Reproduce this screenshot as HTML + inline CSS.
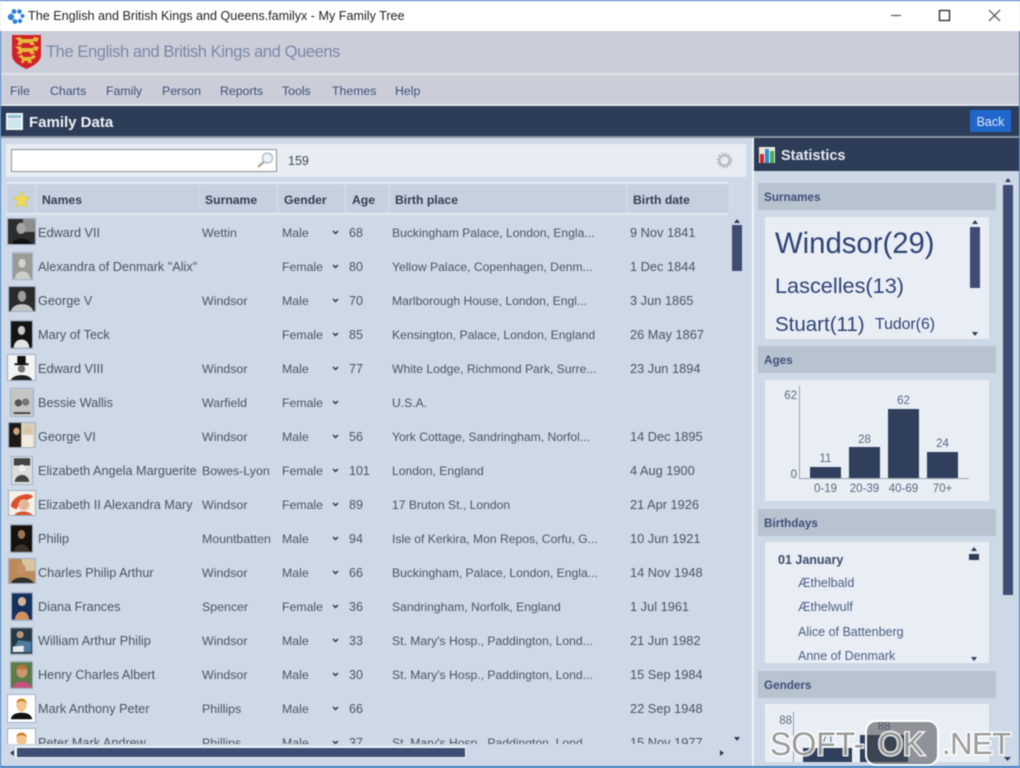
<!DOCTYPE html>
<html lang="en"><head><meta charset="utf-8"><title>The English and British Kings and Queens</title>
<style>
html,body{margin:0;padding:0;width:1020px;height:768px;overflow:hidden;background:#cdd9e6}
body{font-family:"Liberation Sans",sans-serif;position:relative}
#w{position:absolute;inset:0;filter:blur(.5px);overflow:hidden}
.b{position:absolute}
.t{position:absolute;white-space:nowrap;line-height:16px}
.menu{top:83px;font-size:12.300px;color:#3d4f78}
.hc{position:absolute;top:184px;height:29px;background:#c5d1df;font:bold 12.200px/32px "Liberation Sans",sans-serif;color:#333f50;padding-left:5px;box-sizing:border-box}
#rows{position:absolute;left:0;top:216px;width:730px;height:528px;overflow:hidden}
.r{position:absolute;left:0;width:730px;height:34px;font-size:12.500px;color:#4a5563}
.r span{position:absolute;top:9px;line-height:16px;white-space:nowrap}
.r .n{left:38px;font-size:12.700px}.r .s{left:202px;font-size:12.400px}.r .g{left:282px;font-size:12.300px}.r .ag{left:349px}.r .p{left:392px;font-size:12.150px}.r .d{left:630px;font-size:12.800px}
.r svg.c{position:absolute;left:332px;top:14px}
.r svg.v{position:absolute;box-sizing:border-box;border:1px solid #9fb0c6;background:#eef2f6}
.sh{position:absolute;left:758px;width:238px;height:27px;background:#b8c3d0;font:bold 11.700px/30px "Liberation Sans",sans-serif;color:#3d4f78;padding-left:6px;box-sizing:border-box}
.bx{position:absolute;left:765px;width:224px;background:#e9eef5}
.cl{position:absolute;font-size:11.500px;line-height:12px;color:#5a6880;text-align:center;white-space:nowrap}
.bar{position:absolute;background:#2f3f5c}
.bd{position:absolute;left:798px;font-size:12.500px;line-height:16px;color:#4d5e84;white-space:nowrap}
.th{position:absolute;background:#3f4d75}
.wm{position:absolute;font-size:32px;line-height:36px;color:rgba(120,120,120,.75);-webkit-text-stroke:3px rgba(255,255,255,.88);paint-order:stroke fill;white-space:nowrap}
</style></head><body><div id="w">

<!-- title bar -->
<div class="b" style="left:0;top:0;width:1020px;height:31px;background:#fff"></div>
<div class="b" style="left:0;top:0;width:1020px;height:1px;background:#3f7fbd"></div>
<svg class="b" style="left:7px;top:8px" width="18" height="17" viewBox="0 0 18 17"><g fill="#2f7fd6"><circle cx="4" cy="9" r="3.200"/><circle cx="8" cy="13.500" r="2.400"/><circle cx="13" cy="13" r="2.200"/><circle cx="15.500" cy="8" r="2"/><circle cx="12.500" cy="3.500" r="2.300"/><circle cx="7" cy="3.500" r="2.400"/></g><circle cx="10" cy="8.500" r="2.800" fill="#fff"/></svg>
<div class="t" style="left:28px;top:8px;font-size:12.600px;color:#222">The English and British Kings and Queens.familyx - My Family Tree</div>
<svg class="b" style="left:880px;top:6px" width="125" height="20" viewBox="0 0 125 20"><path d="M11 9.500H21" stroke="#555" stroke-width="1.200"/><rect x="59.500" y="4.500" width="10" height="10" fill="none" stroke="#333" stroke-width="1.400"/><path d="M109 4L120 15M120 4L109 15" stroke="#444" stroke-width="1.200"/></svg>

<!-- header -->
<div class="b" style="left:1px;top:31px;width:1018px;height:42px;background:#cbced9"></div>
<div class="b" style="left:1px;top:73px;width:1018px;height:2px;background:#dfe1e8"></div>
<div class="b" style="left:1px;top:75px;width:1018px;height:29px;background:#cbced9"></div>
<div class="b" style="left:1px;top:104px;width:1018px;height:2px;background:#e2e5ea"></div>
<svg class="b" style="left:11px;top:34px" width="31" height="36" viewBox="0 0 31 36"><path d="M1 1H30V21C30 28 22 32 15.500 35C9 32 1 28 1 21Z" fill="#d3212a"/><g fill="#e3b93c"><path d="M4 4L9 3L11 5H22L23 3L28 4L26 8L22 7L24 11H19V9H11V11H6L8 7Z"/><path d="M4 13L9 12L11 14H22L23 12L28 13L26 17L22 16L24 20H19V18H11V20H6L8 16Z"/><path d="M7 22L11 21L13 23H20L21 21L25 22L23 25L20 25L21 29H17V27H13V29H10L11 25Z"/></g></svg>
<div class="t" style="left:46px;top:42px;font-size:16.500px;line-height:21px;letter-spacing:-.4px;color:#7a88a6">The English and British Kings and Queens</div>

<div class="t menu" style="left:10px">File</div>
<div class="t menu" style="left:50px">Charts</div>
<div class="t menu" style="left:106px">Family</div>
<div class="t menu" style="left:162px">Person</div>
<div class="t menu" style="left:220px">Reports</div>
<div class="t menu" style="left:282px">Tools</div>
<div class="t menu" style="left:332px">Themes</div>
<div class="t menu" style="left:395px">Help</div>

<!-- Family Data bar -->
<div class="b" style="left:1px;top:106px;width:1018px;height:30px;background:#2e3d57"></div>
<div class="b" style="left:1px;top:136px;width:1018px;height:2px;background:#8a95a5"></div>
<svg class="b" style="left:6px;top:113px" width="17" height="17" viewBox="0 0 17 17"><rect width="17" height="17" fill="#eef3f6"/><rect x="2" y="2" width="13" height="3" fill="#8fbcd8"/><rect x="2" y="6" width="13" height="9" fill="#cfe6f2"/></svg>
<div class="t" style="left:29px;top:115px;font-size:15px;font-weight:bold;color:#eef2f7">Family Data</div>
<div class="b" style="left:970px;top:110px;width:41px;height:22px;background:#1f66cd;color:#dfe9f8;font-size:12.500px;line-height:25px;text-align:center">Back</div>

<!-- left bg frame -->
<div class="b" style="left:0;top:31px;width:1px;height:737px;background:#3f7fbd"></div>
<div class="b" style="left:1019px;top:31px;width:1px;height:737px;background:#3f7fbd"></div>
<div class="b" style="left:0;top:766px;width:1020px;height:2px;background:#3f7fbd"></div>
<div class="b" style="left:1px;top:138px;width:751px;height:628px;background:#cdd9e6"></div>
<div class="b" style="left:752px;top:138px;width:2px;height:628px;background:#eef2f6"></div>

<!-- toolbar -->
<div class="b" style="left:6px;top:144px;width:740px;height:33px;background:#e8edf3"></div>
<div class="b" style="left:11px;top:149px;width:266px;height:23px;background:#fff;border:1px solid #8c9096;box-sizing:border-box"></div>
<svg class="b" style="left:256px;top:151px" width="19" height="18" viewBox="0 0 19 18"><circle cx="11.500" cy="7" r="5" fill="#eaf2f8" stroke="#aeb9c2" stroke-width="1.300"/><path d="M7.500 11L2 16" stroke="#a8a89c" stroke-width="2.400"/></svg>
<div class="t" style="left:288px;top:153px;font-size:12.500px;color:#404a58">159</div>
<svg class="b" style="left:716px;top:152px" width="17" height="17" viewBox="0 0 17 17"><circle cx="8.500" cy="8.500" r="5" fill="none" stroke="#b3b8bd" stroke-width="2"/><circle cx="8.500" cy="8.500" r="7" fill="none" stroke="#b3b8bd" stroke-width="1.600" stroke-dasharray="2 1.700"/></svg>

<!-- table head -->
<div class="b" style="left:6px;top:182px;width:722px;height:2px;background:#e3e9f0"></div>
<div class="b" style="left:6px;top:213px;width:722px;height:2px;background:#e3e9f0"></div>
<div class="hc" style="left:8px;width:26px"></div>
<svg class="b" style="left:12px;top:190px" width="19" height="19" viewBox="0 0 19 19"><path d="M9.500 1L12 7L18 7.300L13.300 11.300L15 18L9.500 14.300L4 18L5.700 11.300L1 7.300L7 7Z" fill="#f2dc54" stroke="#d9c55e" stroke-width=".7"/></svg>
<div class="hc" style="left:37px;width:162px">Names</div>
<div class="hc" style="left:200px;width:76px">Surname</div>
<div class="hc" style="left:279px;width:65px">Gender</div>
<div class="hc" style="left:347px;width:41px">Age</div>
<div class="hc" style="left:390px;width:236px">Birth place</div>
<div class="hc" style="left:628px;width:100px">Birth date</div>

<!-- rows -->
<div id="rows">
<div class="r" style="top:0px"><svg class="v" style="left:7px;top:2px" width="29" height="27" viewBox="0 0 29 27"><rect width="29" height="27" fill="#2e2e2e"/><rect x="16" width="13" height="14" fill="#8d8d8d"/><ellipse cx="14" cy="10" rx="5" ry="6" fill="#a5a5a5"/><path d="M4 27C6 19 22 19 25 27Z" fill="#111"/></svg><span class="n">Edward VII</span><span class="s">Wettin</span><span class="g">Male</span><svg class="c" width="8" height="6"><path d="M1 1L3.500 3.500L6 1" fill="none" stroke="#2e3d57" stroke-width="1.500"/></svg><span class="ag">68</span><span class="p">Buckingham Palace, London, Engla...</span><span class="d">9 Nov 1841</span></div>

<div class="r" style="top:34px"><svg class="v" style="left:12px;top:2px" width="21" height="28" viewBox="0 0 21 28"><rect width="21" height="28" fill="#9a9a96"/><ellipse cx="10" cy="11" rx="4" ry="5" fill="#d5d2cc"/><path d="M2 28C3 17 18 17 19 28Z" fill="#cfcfca"/></svg><span class="n">Alexandra of Denmark "Alix"</span><span class="g">Female</span><svg class="c" width="8" height="6"><path d="M1 1L3.500 3.500L6 1" fill="none" stroke="#2e3d57" stroke-width="1.500"/></svg><span class="ag">80</span><span class="p">Yellow Palace, Copenhagen, Denm...</span><span class="d">1 Dec 1844</span></div>

<div class="r" style="top:68px"><svg class="v" style="left:8px;top:2px" width="28" height="26" viewBox="0 0 28 26"><rect width="28" height="26" fill="#2b2b2b"/><ellipse cx="14" cy="10" rx="4.500" ry="6" fill="#9c9c9c"/><path d="M2 26C4 16 24 16 26 26Z" fill="#c4c4c4"/></svg><span class="n">George V</span><span class="s">Windsor</span><span class="g">Male</span><svg class="c" width="8" height="6"><path d="M1 1L3.500 3.500L6 1" fill="none" stroke="#2e3d57" stroke-width="1.500"/></svg><span class="ag">70</span><span class="p">Marlborough House, London, Engl...</span><span class="d">3 Jun 1865</span></div>

<div class="r" style="top:102px"><svg class="v" style="left:10px;top:2px" width="23" height="29" viewBox="0 0 23 29"><rect width="23" height="29" fill="#141414"/><ellipse cx="11.500" cy="10" rx="4" ry="5" fill="#c8c8c8"/><path d="M3 29C3 17 20 17 20 29Z" fill="#e2e2e2"/></svg><span class="n">Mary of Teck</span><span class="g">Female</span><svg class="c" width="8" height="6"><path d="M1 1L3.500 3.500L6 1" fill="none" stroke="#2e3d57" stroke-width="1.500"/></svg><span class="ag">85</span><span class="p">Kensington, Palace, London, England</span><span class="d">26 May 1867</span></div>

<div class="r" style="top:136px"><svg class="v" style="left:7px;top:2px" width="29" height="27" viewBox="0 0 29 27"><rect width="29" height="27" fill="#f3f3f3"/><rect x="10" y="1" width="9" height="9" fill="#111"/><rect x="7" y="9" width="15" height="2" fill="#111"/><ellipse cx="14.500" cy="15" rx="4" ry="4" fill="#777"/><path d="M3 27C6 20 23 20 26 27Z" fill="#222"/></svg><span class="n">Edward VIII</span><span class="s">Windsor</span><span class="g">Male</span><svg class="c" width="8" height="6"><path d="M1 1L3.500 3.500L6 1" fill="none" stroke="#2e3d57" stroke-width="1.500"/></svg><span class="ag">77</span><span class="p">White Lodge, Richmond Park, Surre...</span><span class="d">23 Jun 1894</span></div>

<div class="r" style="top:170px"><svg class="v" style="left:10px;top:2px" width="24" height="29" viewBox="0 0 24 29"><rect width="24" height="29" fill="#c5c5c3"/><circle cx="8" cy="15" r="4" fill="#555"/><circle cx="16" cy="14" r="4" fill="#777"/><path d="M3 25H21V27H3Z" fill="#444"/></svg><span class="n">Bessie Wallis</span><span class="s">Warfield</span><span class="g">Female</span><svg class="c" width="8" height="6"><path d="M1 1L3.500 3.500L6 1" fill="none" stroke="#2e3d57" stroke-width="1.500"/></svg><span class="p">U.S.A.</span></div>

<div class="r" style="top:204px"><svg class="v" style="left:8px;top:2px" width="28" height="26" viewBox="0 0 28 26"><rect width="28" height="26" fill="#d8cfba"/><rect width="13" height="26" fill="#1d1a16"/><ellipse cx="8" cy="9" rx="3.500" ry="4" fill="#caa27c"/><ellipse cx="21" cy="8" rx="4" ry="4" fill="#d9c3a5"/><rect x="14" y="13" width="12" height="13" fill="#f0ece0"/></svg><span class="n">George VI</span><span class="s">Windsor</span><span class="g">Male</span><svg class="c" width="8" height="6"><path d="M1 1L3.500 3.500L6 1" fill="none" stroke="#2e3d57" stroke-width="1.500"/></svg><span class="ag">56</span><span class="p">York Cottage, Sandringham, Norfol...</span><span class="d">14 Dec 1895</span></div>

<div class="r" style="top:238px"><svg class="v" style="left:11px;top:2px" width="22" height="29" viewBox="0 0 22 29"><rect width="22" height="29" fill="#dcdcdc"/><rect x="2" y="1" width="18" height="8" fill="#444"/><ellipse cx="11" cy="12" rx="4" ry="4" fill="#eee"/><path d="M3 27C4 17 18 17 19 27Z" fill="#444"/></svg><span class="n">Elizabeth Angela Marguerite</span><span class="s">Bowes-Lyon</span><span class="g">Female</span><svg class="c" width="8" height="6"><path d="M1 1L3.500 3.500L6 1" fill="none" stroke="#2e3d57" stroke-width="1.500"/></svg><span class="ag">101</span><span class="p">London, England</span><span class="d">4 Aug 1900</span></div>

<div class="r" style="top:272px"><svg class="v" style="left:8px;top:2px" width="28" height="26" viewBox="0 0 28 26"><rect width="28" height="26" fill="#f4efe8"/><path d="M2 17C2 5 22 0 26 6C23 10 12 10 8 20Z" fill="#d9502c"/><ellipse cx="16" cy="15" rx="6" ry="6" fill="#e2b899"/><path d="M6 26C8 21 22 21 25 26Z" fill="#d9502c"/></svg><span class="n">Elizabeth II Alexandra Mary</span><span class="s">Windsor</span><span class="g">Female</span><svg class="c" width="8" height="6"><path d="M1 1L3.500 3.500L6 1" fill="none" stroke="#2e3d57" stroke-width="1.500"/></svg><span class="ag">89</span><span class="p">17 Bruton St., London</span><span class="d">21 Apr 1926</span></div>

<div class="r" style="top:306px"><svg class="v" style="left:10px;top:2px" width="23" height="29" viewBox="0 0 23 29"><rect width="23" height="29" fill="#15110e"/><ellipse cx="11.500" cy="10" rx="4" ry="5" fill="#9a7455"/><path d="M3 29C4 18 19 18 20 29Z" fill="#3a3128"/></svg><span class="n">Philip</span><span class="s">Mountbatten</span><span class="g">Male</span><svg class="c" width="8" height="6"><path d="M1 1L3.500 3.500L6 1" fill="none" stroke="#2e3d57" stroke-width="1.500"/></svg><span class="ag">94</span><span class="p">Isle of Kerkira, Mon Repos, Corfu, G...</span><span class="d">10 Jun 1921</span></div>

<div class="r" style="top:340px"><svg class="v" style="left:8px;top:2px" width="28" height="26" viewBox="0 0 28 26"><rect width="28" height="26" fill="#b98c5a"/><rect x="14" width="14" height="13" fill="#d7c5a2"/><ellipse cx="13" cy="11" rx="5" ry="6" fill="#c88f63"/><path d="M2 26C5 18 22 18 27 26Z" fill="#30302f"/></svg><span class="n">Charles Philip Arthur</span><span class="s">Windsor</span><span class="g">Male</span><svg class="c" width="8" height="6"><path d="M1 1L3.500 3.500L6 1" fill="none" stroke="#2e3d57" stroke-width="1.500"/></svg><span class="ag">66</span><span class="p">Buckingham, Palace, London, Engla...</span><span class="d">14 Nov 1948</span></div>

<div class="r" style="top:374px"><svg class="v" style="left:11px;top:2px" width="22" height="29" viewBox="0 0 22 29"><rect width="22" height="29" fill="#14305e"/><ellipse cx="11" cy="9" rx="4.500" ry="5" fill="#d2b48f"/><path d="M3 29C4 17 18 17 19 29Z" fill="#d3915f"/></svg><span class="n">Diana Frances</span><span class="s">Spencer</span><span class="g">Female</span><svg class="c" width="8" height="6"><path d="M1 1L3.500 3.500L6 1" fill="none" stroke="#2e3d57" stroke-width="1.500"/></svg><span class="ag">36</span><span class="p">Sandringham, Norfolk, England</span><span class="d">1 Jul 1961</span></div>

<div class="r" style="top:408px"><svg class="v" style="left:10px;top:3px" width="23" height="28" viewBox="0 0 23 28"><rect width="23" height="28" fill="#253a48"/><ellipse cx="10" cy="7" rx="4" ry="4" fill="#b79580"/><path d="M1 26L8 13L22 15V26Z" fill="#4b7ca0"/><path d="M2 20L14 19V26H2Z" fill="#e5e8ea"/></svg><span class="n">William Arthur Philip</span><span class="s">Windsor</span><span class="g">Male</span><svg class="c" width="8" height="6"><path d="M1 1L3.500 3.500L6 1" fill="none" stroke="#2e3d57" stroke-width="1.500"/></svg><span class="ag">33</span><span class="p">St. Mary's Hosp., Paddington, Lond...</span><span class="d">21 Jun 1982</span></div>

<div class="r" style="top:442px"><svg class="v" style="left:10px;top:3px" width="23" height="28" viewBox="0 0 23 28"><rect width="23" height="28" fill="#5c7a4a"/><ellipse cx="12" cy="10" rx="6" ry="7" fill="#cc9670"/><path d="M6 8C6 1 18 1 18 8Z" fill="#b5763c"/><path d="M2 28C4 19 20 19 22 28Z" fill="#c7507c"/></svg><span class="n">Henry Charles Albert</span><span class="s">Windsor</span><span class="g">Male</span><svg class="c" width="8" height="6"><path d="M1 1L3.500 3.500L6 1" fill="none" stroke="#2e3d57" stroke-width="1.500"/></svg><span class="ag">30</span><span class="p">St. Mary's Hosp., Paddington, Lond...</span><span class="d">15 Sep 1984</span></div>

<div class="r" style="top:476px"><svg class="v" style="left:7px;top:2px" width="29" height="29" viewBox="0 0 29 29"><rect width="29" height="29" fill="#fff"/><ellipse cx="14.500" cy="11" rx="5.500" ry="7" fill="#f5c48c"/><path d="M9 9C9 2 20 2 20 9C17 6 12 6 9 9Z" fill="#c9842f"/><path d="M3 26C4 20 10 19 14.500 19C19 19 25 20 26 26Z" fill="#111"/></svg><span class="n">Mark Anthony Peter</span><span class="s">Phillips</span><span class="g">Male</span><svg class="c" width="8" height="6"><path d="M1 1L3.500 3.500L6 1" fill="none" stroke="#2e3d57" stroke-width="1.500"/></svg><span class="ag">66</span><span class="d">22 Sep 1948</span></div>

<div class="r" style="top:510px"><svg class="v" style="left:7px;top:2px" width="29" height="29" viewBox="0 0 29 29"><rect width="29" height="29" fill="#fff"/><ellipse cx="14.500" cy="11" rx="5.500" ry="7" fill="#f5c48c"/><path d="M9 9C9 2 20 2 20 9C17 6 12 6 9 9Z" fill="#c9842f"/><path d="M3 26C4 20 10 19 14.500 19C19 19 25 20 26 26Z" fill="#111"/></svg><span class="n">Peter Mark Andrew</span><span class="s">Phillips</span><span class="g">Male</span><svg class="c" width="8" height="6"><path d="M1 1L3.500 3.500L6 1" fill="none" stroke="#2e3d57" stroke-width="1.500"/></svg><span class="ag">37</span><span class="p">St. Mary's Hosp., Paddington, Lond...</span><span class="d">15 Nov 1977</span></div>
</div>

<!-- table scrollbars -->
<div class="th" style="left:732px;top:225px;width:10px;height:46px"></div>
<svg class="b" style="left:734px;top:219px" width="6" height="4"><path d="M0 4L3 0L6 4Z" fill="#2e3d57"/></svg>
<svg class="b" style="left:734px;top:737px" width="6" height="4"><path d="M0 0L3 4L6 0Z" fill="#2e3d57"/></svg>
<div class="b" style="left:15px;top:746px;width:451px;height:12px;background:#eef2f6"></div>
<div class="th" style="left:17px;top:748px;width:448px;height:9px"></div>
<svg class="b" style="left:10px;top:750px" width="4" height="6"><path d="M4 0L0 3L4 6Z" fill="#2e3d57"/></svg>
<svg class="b" style="left:720px;top:750px" width="4" height="6"><path d="M0 0L4 3L0 6Z" fill="#2e3d57"/></svg>

<!-- Statistics -->
<div class="b" style="left:754px;top:138px;width:265px;height:33px;background:#2e3d57"></div>
<svg class="b" style="left:759px;top:147px" width="16" height="16" viewBox="0 0 16 16"><rect width="16" height="16" fill="#eee8dc"/><rect x="1" y="7" width="4" height="9" fill="#d8262b"/><rect x="6" y="2" width="4" height="14" fill="#2a8fd0"/><rect x="11" y="4" width="4" height="12" fill="#3fae58"/></svg>
<div class="t" style="left:781px;top:148px;font-size:14.500px;font-weight:bold;color:#e6ebf2">Statistics</div>
<div class="th" style="left:1003px;top:185px;width:10px;height:410px"></div>
<svg class="b" style="left:1005px;top:178px" width="6" height="4"><path d="M0 4L3 0L6 4Z" fill="#2e3d57"/></svg>
<svg class="b" style="left:1004px;top:757px" width="7" height="4"><path d="M0 0L3.500 4L7 0Z" fill="#2e3d57"/></svg>

<div class="sh" style="top:183px">Surnames</div>
<div class="bx" style="top:217px;height:122px"></div>
<div class="t" style="left:775px;top:227px;font-size:29.300px;line-height:34px;color:#2f4374">Windsor(29)</div>
<div class="t" style="left:775px;top:272px;font-size:21.700px;line-height:28px;color:#2f4374">Lascelles(13)</div>
<div class="t" style="left:775px;top:313px;font-size:20.500px;line-height:24px;color:#2f4374">Stuart(11)</div>
<div class="t" style="left:875px;top:316px;font-size:15.800px;line-height:18px;color:#2f4374">Tudor(6)</div>
<div class="th" style="left:970px;top:227px;width:10px;height:61px"></div>
<svg class="b" style="left:972px;top:220px" width="6" height="4"><path d="M0 4L3 0L6 4Z" fill="#2e3d57"/></svg>
<svg class="b" style="left:972px;top:332px" width="6" height="4"><path d="M0 0L3 4L6 0Z" fill="#2e3d57"/></svg>

<div class="sh" style="top:346px">Ages</div>
<div class="bx" style="top:380px;height:121px"></div>
<div class="b" style="left:799px;top:386px;width:1px;height:92px;background:#9aa2ad"></div>
<div class="b" style="left:799px;top:478px;width:170px;height:1px;background:#9aa2ad"></div>
<div class="bar" style="left:810px;top:467px;width:31px;height:11px"></div>
<div class="bar" style="left:849px;top:447px;width:31px;height:31px"></div>
<div class="bar" style="left:888px;top:409px;width:31px;height:69px"></div>
<div class="bar" style="left:927px;top:452px;width:31px;height:26px"></div>
<div class="cl" style="left:780px;top:390px;width:17px;text-align:right">62</div>
<div class="cl" style="left:780px;top:469px;width:17px;text-align:right">0</div>
<div class="cl" style="left:810px;top:453px;width:31px">11</div>
<div class="cl" style="left:849px;top:434px;width:31px">28</div>
<div class="cl" style="left:888px;top:395px;width:31px">62</div>
<div class="cl" style="left:927px;top:438px;width:31px">24</div>
<div class="cl" style="left:805px;top:483px;width:41px">0-19</div>
<div class="cl" style="left:844px;top:483px;width:41px">20-39</div>
<div class="cl" style="left:883px;top:483px;width:41px">40-69</div>
<div class="cl" style="left:922px;top:483px;width:41px">70+</div>

<div class="sh" style="top:509px">Birthdays</div>
<div class="bx" style="top:542px;height:121px"></div>
<div class="t" style="left:778px;top:552px;font-size:12.500px;font-weight:bold;color:#3c4b6a">01 January</div>
<div class="bd" style="top:575px">Æthelbald</div>
<div class="bd" style="top:599px">Æthelwulf</div>
<div class="bd" style="top:624px">Alice of Battenberg</div>
<div class="bd" style="top:648px">Anne of Denmark</div>
<div class="th" style="left:969px;top:554px;width:10px;height:6px;background:#2e3d57"></div>
<svg class="b" style="left:971px;top:547px" width="6" height="4"><path d="M0 4L3 0L6 4Z" fill="#2e3d57"/></svg>
<svg class="b" style="left:971px;top:657px" width="6" height="4"><path d="M0 0L3 4L6 0Z" fill="#2e3d57"/></svg>

<div class="sh" style="top:671px">Genders</div>
<div class="bx" style="top:704px;height:58px"></div>
<div class="b" style="left:793px;top:712px;width:1px;height:50px;background:#9aa2ad"></div>
<div class="cl" style="left:775px;top:715px;width:17px;text-align:right">88</div>
<div class="cl" style="left:860px;top:721px;width:48px">88</div>
<div class="cl" style="left:803px;top:734px;width:49px">71</div>
<div class="bar" style="left:803px;top:748px;width:49px;height:14px"></div>
<div class="bar" style="left:860px;top:735px;width:48px;height:27px"></div>

<!-- watermark -->
<div class="b" style="left:865px;top:720px;width:74px;height:46px;box-sizing:border-box;border:2.500px solid #fff;border-radius:11px;background:rgba(70,72,76,.55)"></div>
<div class="wm" style="left:770px;top:726px">SOFT-</div>
<div class="wm" style="left:878px;top:726px">OK</div>
<div class="wm" style="left:942px;top:726px;font-size:31px;letter-spacing:-.5px">.NET</div>

</div></body></html>
